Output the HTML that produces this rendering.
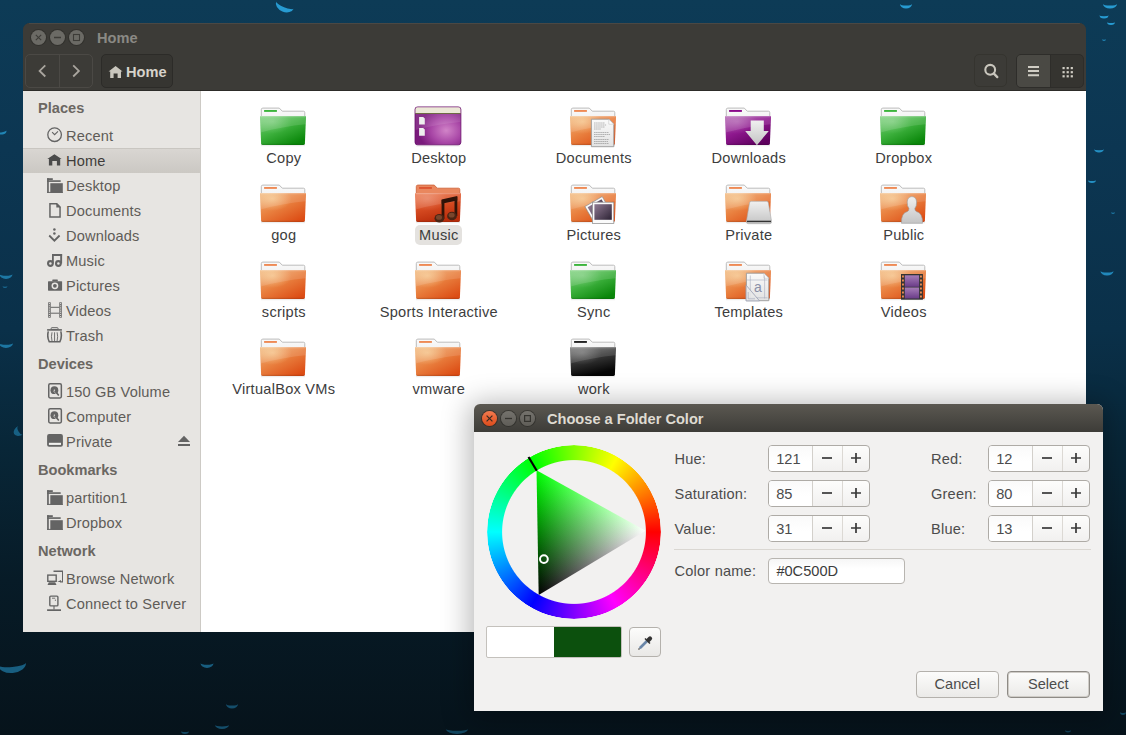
<!DOCTYPE html><html><head><meta charset="utf-8"><style>
*{box-sizing:border-box}
html,body{margin:0;padding:0}
body{width:1126px;height:735px;overflow:hidden;position:relative;font-family:"Liberation Sans",sans-serif;
background:linear-gradient(180deg,#0d3b56 0px,#0c3652 150px,#0a3049 330px,#082637 450px,#071b27 580px,#06131b 735px);}
.a{position:absolute}
.drop{position:absolute;border-radius:50%;background:radial-gradient(ellipse 75% 65% at 50% 90%,rgba(60,180,235,0.95),rgba(40,140,195,0.7) 50%,rgba(20,70,100,0) 100%)}
#naut{position:absolute;left:23px;top:23px;width:1063px;height:609px;border-radius:7px 7px 0 0;overflow:hidden;background:#3c3b37}
#ntop{position:absolute;left:0;top:0;width:1063px;height:68px;background:#3c3b37}
#side{position:absolute;left:0;top:68px;width:178px;height:541px;background:#e7e5e2;border-right:1px solid #cdcac5}
#content{position:absolute;left:178px;top:68px;width:885px;height:541px;background:#fff}
.wb{position:absolute;width:15px;height:15px;border-radius:50%;background:#6b6a65;box-shadow:0 0 0 1px rgba(40,40,36,0.5)}
.tb{position:absolute;border:1px solid #2e2d2a;border-radius:5px}
.sh{position:absolute;left:15px;font-weight:bold;font-size:14.6px;line-height:16px;color:#6b6762;white-space:nowrap}
.si{position:absolute;left:43px;font-size:14.6px;letter-spacing:0.15px;line-height:16px;color:#5f5c58;white-space:nowrap}
.sic{position:absolute;left:24px;width:16px;height:16px}
.lbl{position:absolute;width:160px;text-align:center;font-size:14.6px;letter-spacing:0.25px;line-height:16px;color:#3d3d3d;white-space:nowrap}
.fi{position:absolute;width:48px;height:48px}
#dlg{position:absolute;left:474px;top:404px;width:629px;height:307px;border-radius:6px 6px 0 0;background:#f2f1f0;box-shadow:0 3px 28px 5px rgba(0,0,0,0.28)}
#dtop{position:absolute;left:0;top:0;width:629px;height:28px;border-radius:6px 6px 0 0;background:linear-gradient(#5b5851,#3d3c38)}
.dl{position:absolute;font-size:14.6px;letter-spacing:0.2px;line-height:16px;color:#4c4c4c;white-space:nowrap}
.spin{position:absolute;height:26px;border:1px solid #aeaba6;border-radius:4px;background:linear-gradient(#fdfdfc,#f1f0ef)}
.spin .v{position:absolute;left:0;top:0;height:24px;background:linear-gradient(#fafafa,#fff 60%);border-radius:3px 0 0 3px;border-right:1px solid #d3d0cb;font-size:14.6px;line-height:24px;padding-left:7px;color:#4c4c4c}
.btn{position:absolute;height:28px;border:1px solid #b4b1ac;border-radius:4px;background:linear-gradient(#fcfcfb,#ebeae8);text-align:center;font-size:14.6px;line-height:26px;color:#4c4c4c}
</style></head><body>
<svg class="a" style="left:0;top:0" width="1126" height="735"><g fill="#2aa6e0"><path d="M275.5 5.0A9.5 7.0 0 0 0 294.5 5.0A9.5 2.4 0 0 1 275.5 5.0Z" fill-opacity="0.9" transform="rotate(22 285 5)"/><path d="M900.0 4.0A6.0 4.5 0 0 0 912.0 4.0A6.0 1.6 0 0 1 900.0 4.0Z" fill-opacity="0.9"/><path d="M1103.0 4.0A7.0 4.5 0 0 0 1117.0 4.0A7.0 1.6 0 0 1 1103.0 4.0Z" fill-opacity="0.9"/><path d="M1099.5 15.0A4.5 3.5 0 0 0 1108.5 15.0A4.5 1.2 0 0 1 1099.5 15.0Z" fill-opacity="0.9"/><path d="M1107.0 22.0A4.0 3.0 0 0 0 1115.0 22.0A4.0 1.0 0 0 1 1107.0 22.0Z" fill-opacity="0.9"/><path d="M1102.0 39.0A2.0 2.0 0 0 0 1106.0 39.0A2.0 0.7 0 0 1 1102.0 39.0Z" fill-opacity="0.7"/><path d="M1094.0 149.0A5.0 3.5 0 0 0 1104.0 149.0A5.0 1.2 0 0 1 1094.0 149.0Z" fill-opacity="0.8"/><path d="M1088.0 180.0A4.0 3.0 0 0 0 1096.0 180.0A4.0 1.0 0 0 1 1088.0 180.0Z" fill-opacity="0.8"/><path d="M1111.0 212.0A2.0 2.0 0 0 0 1115.0 212.0A2.0 0.7 0 0 1 1111.0 212.0Z" fill-opacity="0.6"/><path d="M1100.5 271.0A6.5 4.5 0 0 0 1113.5 271.0A6.5 1.6 0 0 1 1100.5 271.0Z" fill-opacity="0.75"/><path d="M-2.5 131.0A4.5 3.5 0 0 0 6.5 131.0A4.5 1.2 0 0 1 -2.5 131.0Z" fill-opacity="0.7" transform="rotate(-10 2 131)"/><path d="M-0.5 274.0A6.5 5.0 0 0 0 12.5 274.0A6.5 1.8 0 0 1 -0.5 274.0Z" fill-opacity="0.6"/><path d="M2.5 286.0A2.5 2.0 0 0 0 7.5 286.0A2.5 0.7 0 0 1 2.5 286.0Z" fill-opacity="0.5"/><path d="M-1.0 343.0A7.0 5.0 0 0 0 13.0 343.0A7.0 1.8 0 0 1 -1.0 343.0Z" fill-opacity="0.6"/><path d="M16.0 430.0A5.0 8.0 0 0 0 26.0 430.0A5.0 2.8 0 0 1 16.0 430.0Z" fill-opacity="0.45" transform="rotate(60 21 430)"/><path d="M-2.0 664.0A14.0 9.0 0 0 0 26.0 664.0A14.0 3.1 0 0 1 -2.0 664.0Z" fill-opacity="0.5" transform="rotate(-5 12 664)"/><path d="M200.5 663.0A6.5 5.0 0 0 0 213.5 663.0A6.5 1.8 0 0 1 200.5 663.0Z" fill-opacity="0.5"/><path d="M226.0 704.0A6.0 4.5 0 0 0 238.0 704.0A6.0 1.6 0 0 1 226.0 704.0Z" fill-opacity="0.4"/><path d="M215.0 725.0A7.0 4.0 0 0 0 229.0 725.0A7.0 1.4 0 0 1 215.0 725.0Z" fill-opacity="0.4"/><path d="M181.0 731.0A4.0 3.0 0 0 0 189.0 731.0A4.0 1.0 0 0 1 181.0 731.0Z" fill-opacity="0.35"/><path d="M446.0 729.0A11.0 5.0 0 0 0 468.0 729.0A11.0 1.8 0 0 1 446.0 729.0Z" fill-opacity="0.35"/><path d="M1120.0 712.0A3.0 3.0 0 0 0 1126.0 712.0A3.0 1.0 0 0 1 1120.0 712.0Z" fill-opacity="0.35"/><path d="M1065.0 730.0A3.0 2.5 0 0 0 1071.0 730.0A3.0 0.9 0 0 1 1065.0 730.0Z" fill-opacity="0.3"/></g></svg>
<div id="naut"><div id="ntop">
<div class="wb" style="left:8px;top:7px"><svg width="15" height="15" style="position:absolute;left:0;top:0"><path d="M4.8 4.8L10.2 10.2M10.2 4.8L4.8 10.2" stroke="#3d3c38" stroke-width="1.1"/></svg></div>
<div class="wb" style="left:27px;top:7px"><svg width="15" height="15" style="position:absolute;left:0;top:0"><path d="M4 7.5H11" stroke="#3d3c38" stroke-width="1.3"/></svg></div>
<div class="wb" style="left:46px;top:7px"><svg width="15" height="15" style="position:absolute;left:0;top:0"><rect x="4.5" y="4.5" width="6" height="6" fill="none" stroke="#3d3c38" stroke-width="1.1"/></svg></div>
<div class="a" style="left:74px;top:7px;font-weight:bold;font-size:14.6px;line-height:16px;color:#8a8984">Home</div>
<div class="tb" style="left:2px;top:31px;width:68px;height:34px;border-color:#4b4945"></div>
<div class="a" style="left:36px;top:32px;width:1px;height:32px;background:#4b4945"></div>
<svg class="a" style="left:12px;top:39px" width="16" height="18"><path d="M10.3 3.3L4.6 8.9L10.3 14.5" fill="none" stroke="#a9a59e" stroke-width="1.8"/></svg>
<svg class="a" style="left:45px;top:39px" width="16" height="18"><path d="M5.2 3.3L10.9 8.9L5.2 14.5" fill="none" stroke="#a9a59e" stroke-width="1.8"/></svg>
<div class="tb" style="left:78px;top:31px;width:72px;height:34px;background:#363531;border-color:#2c2b28"></div>
<svg class="a" style="left:85px;top:41px" width="16" height="16"><path d="M0.6 7.6L7.6 2L14.6 7.6H13V14H9.6V9.6H5.6V14H2.2V7.6Z" fill="#c9c6bd"/></svg>
<div class="a" style="left:103px;top:41px;font-weight:bold;font-size:14.6px;line-height:16px;color:#d6d3cb">Home</div>
<div class="tb" style="left:951px;top:31px;width:33px;height:33px;border-color:#35342f"></div>
<svg class="a" style="left:958px;top:38px" width="20" height="20"><circle cx="9.2" cy="8.8" r="4.9" fill="none" stroke="#c9c6bd" stroke-width="2.1"/><path d="M12.7 12.4L16.3 16.1" stroke="#c9c6bd" stroke-width="2.3" stroke-linecap="round"/></svg>
<div class="tb" style="left:993px;top:31px;width:68px;height:34px;background:#353430;border-color:#2e2d2a"></div>
<div class="a" style="left:994px;top:32px;width:33px;height:32px;background:#4a4944;border-radius:4px 0 0 4px"></div>
<div class="a" style="left:1027px;top:32px;width:1px;height:32px;background:#2e2d2a"></div>
<svg class="a" style="left:1003px;top:41px" width="16" height="14"><path d="M2 3H13M2 7H13M2 11.3H13" stroke="#d0cdc4" stroke-width="2"/></svg>
<svg class="a" style="left:1039px;top:43px" width="12" height="12"><rect x="0.5" y="1.0" width="2.2" height="2.2" fill="#d0cdc4"/><rect x="0.5" y="5.1" width="2.2" height="2.2" fill="#d0cdc4"/><rect x="0.5" y="9.2" width="2.2" height="2.2" fill="#d0cdc4"/><rect x="4.6" y="1.0" width="2.2" height="2.2" fill="#d0cdc4"/><rect x="4.6" y="5.1" width="2.2" height="2.2" fill="#d0cdc4"/><rect x="4.6" y="9.2" width="2.2" height="2.2" fill="#d0cdc4"/><rect x="8.7" y="1.0" width="2.2" height="2.2" fill="#d0cdc4"/><rect x="8.7" y="5.1" width="2.2" height="2.2" fill="#d0cdc4"/><rect x="8.7" y="9.2" width="2.2" height="2.2" fill="#d0cdc4"/></svg>
<div class="a" style="left:0;top:67px;width:1063px;height:1px;background:#2d2c29"></div><div class="a" style="left:6px;top:0;width:1051px;height:1px;background:#4a4844"></div>
</div>
<div id="content"></div><div id="side">
<div class="a" style="left:0;top:57px;width:177px;height:25px;background:linear-gradient(#d9d6d2,#cbc8c3);border-top:1px solid #c9c6c1"></div>
</div>
<div class="a" style="left:0;top:68px;width:177px;height:541px">
<div class="sh" style="top:8.8px">Places</div>
<div class="si" style="top:36.6px;">Recent</div>
<svg class="sic" style="top:35.8px" width="16" height="16" viewBox="0 0 16 16"><circle cx="7.6" cy="7.7" r="6.8" fill="none" stroke="#646464" stroke-width="1.3"/><path d="M5.1 5.2L7.6 7.7L11 4.3" fill="none" stroke="#646464" stroke-width="1.1"/></svg>
<div class="si" style="top:61.9px;color:#3e3c3a">Home</div>
<svg class="sic" style="top:61.1px" width="16" height="16" viewBox="0 0 16 16"><path d="M0.3 7L7.4 2.2L14.6 7H13.2V13.6H9.9V9H5.3V13.6H1.9V7Z" fill="#4b4b4b"/></svg>
<div class="si" style="top:86.8px;">Desktop</div>
<svg class="sic" style="top:86.0px" width="16" height="16" viewBox="0 0 16 16"><rect x="0.1" y="1.2" width="1.7" height="14.7" fill="#646464"/><rect x="0.1" y="1.2" width="5.7" height="1.8" fill="#646464"/><rect x="0.1" y="3.25" width="13.6" height="1.65" fill="#646464"/><rect x="3.3" y="6.2" width="12.5" height="9.7" fill="#646464"/><rect x="0.1" y="14.9" width="15.7" height="1" fill="#646464"/></svg>
<div class="si" style="top:111.8px;">Documents</div>
<svg class="sic" style="top:111.0px" width="16" height="16" viewBox="0 0 16 16"><path d="M2.95 1.85H9.8L13.05 5.1V15.05H2.95Z" fill="none" stroke="#646464" stroke-width="1.5"/><path d="M9.3 1.1L13.8 5.6H9.3Z" fill="#646464"/></svg>
<div class="si" style="top:136.8px;">Downloads</div>
<svg class="sic" style="top:136.0px" width="16" height="16" viewBox="0 0 16 16"><circle cx="7.4" cy="2.4" r="1.25" fill="#646464"/><circle cx="7.4" cy="6.4" r="1.25" fill="#646464"/><path d="M2.2 8.5L7.4 13.7L12.6 8.5" fill="none" stroke="#646464" stroke-width="1.8"/></svg>
<div class="si" style="top:161.8px;">Music</div>
<svg class="sic" style="top:161.0px" width="16" height="16" viewBox="0 0 16 16"><path d="M5 2H15.1V4.1H6.8V11.5H5Z" fill="#646464"/><rect x="13.2" y="2" width="1.9" height="9.5" fill="#646464"/><circle cx="3.4" cy="11.5" r="2.35" fill="none" stroke="#646464" stroke-width="2.1"/><circle cx="11.4" cy="11.5" r="2.35" fill="none" stroke="#646464" stroke-width="2.1"/></svg>
<div class="si" style="top:186.8px;">Pictures</div>
<svg class="sic" style="top:186.0px" width="16" height="16" viewBox="0 0 16 16"><rect x="5.3" y="2.4" width="5.5" height="2" rx="0.5" fill="#646464"/><rect x="1" y="4.2" width="14.1" height="9.5" rx="0.6" fill="#646464"/><circle cx="7.9" cy="8.8" r="3.4" fill="#e7e5e2"/><circle cx="7.9" cy="8.8" r="1.9" fill="#646464"/></svg>
<div class="si" style="top:211.8px;">Videos</div>
<svg class="sic" style="top:211.0px" width="16" height="16" viewBox="0 0 16 16"><rect x="1.2" y="0.3" width="2.5" height="15.4" fill="#646464"/><rect x="12.3" y="0.3" width="2.5" height="15.4" fill="#646464"/><circle cx="2.45" cy="1.60" r="0.6" fill="#e7e5e2"/><circle cx="13.55" cy="1.60" r="0.6" fill="#e7e5e2"/><circle cx="2.45" cy="3.75" r="0.6" fill="#e7e5e2"/><circle cx="13.55" cy="3.75" r="0.6" fill="#e7e5e2"/><circle cx="2.45" cy="5.90" r="0.6" fill="#e7e5e2"/><circle cx="13.55" cy="5.90" r="0.6" fill="#e7e5e2"/><circle cx="2.45" cy="8.05" r="0.6" fill="#e7e5e2"/><circle cx="13.55" cy="8.05" r="0.6" fill="#e7e5e2"/><circle cx="2.45" cy="10.20" r="0.6" fill="#e7e5e2"/><circle cx="13.55" cy="10.20" r="0.6" fill="#e7e5e2"/><circle cx="2.45" cy="12.35" r="0.6" fill="#e7e5e2"/><circle cx="13.55" cy="12.35" r="0.6" fill="#e7e5e2"/><circle cx="2.45" cy="14.50" r="0.6" fill="#e7e5e2"/><circle cx="13.55" cy="14.50" r="0.6" fill="#e7e5e2"/><path d="M3.7 5.3H12.3M3.7 11.2H12.3" stroke="#646464" stroke-width="1"/></svg>
<div class="si" style="top:236.8px;">Trash</div>
<svg class="sic" style="top:236.0px" width="16" height="16" viewBox="0 0 16 16"><rect x="4.2" y="0.7" width="6.8" height="1.9" rx="0.6" fill="none" stroke="#646464" stroke-width="1"/><rect x="0.1" y="2.1" width="14.8" height="1.6" fill="#646464"/><path d="M1.3 4.4Q-0.2 10 2.3 14.8H12.8Q15.3 10 13.8 4.4" fill="none" stroke="#646464" stroke-width="1.6"/><path d="M5 5.3Q3.9 9.7 5 14M7.55 5.3V14M10.1 5.3Q11.2 9.7 10.1 14" fill="none" stroke="#646464" stroke-width="0.9"/></svg>
<div class="sh" style="top:264.6px">Devices</div>
<div class="si" style="top:292.8px;">150 GB Volume</div>
<svg class="sic" style="top:292.0px" width="16" height="16" viewBox="0 0 16 16"><rect x="1.75" y="0.85" width="12.6" height="14.1" rx="1.4" fill="none" stroke="#646464" stroke-width="1.5"/><circle cx="7.4" cy="7.2" r="3.9" fill="#646464"/><circle cx="7.4" cy="7.2" r="0.8" fill="#e7e5e2"/><path d="M6.6 8L10.6 12.3" stroke="#e7e5e2" stroke-width="0.8"/><path d="M8.4 8.2L11.4 12" stroke="#646464" stroke-width="1.6" stroke-linecap="round"/></svg>
<div class="si" style="top:317.9px;">Computer</div>
<svg class="sic" style="top:317.1px" width="16" height="16" viewBox="0 0 16 16"><rect x="1.75" y="0.85" width="12.6" height="14.1" rx="1.4" fill="none" stroke="#646464" stroke-width="1.5"/><circle cx="7.4" cy="7.2" r="3.9" fill="#646464"/><circle cx="7.4" cy="7.2" r="0.8" fill="#e7e5e2"/><path d="M6.6 8L10.6 12.3" stroke="#e7e5e2" stroke-width="0.8"/><path d="M8.4 8.2L11.4 12" stroke="#646464" stroke-width="1.6" stroke-linecap="round"/></svg>
<div class="si" style="top:342.9px;">Private</div>
<svg class="sic" style="top:342.1px" width="16" height="16" viewBox="0 0 16 16"><rect x="0.1" y="1" width="15.8" height="12.7" rx="2" fill="#646464"/><rect x="1.9" y="9.8" width="12.1" height="2.1" fill="#f2f2f0"/></svg>
<div class="sh" style="top:371.2px">Bookmarks</div>
<div class="si" style="top:398.5px;">partition1</div>
<svg class="sic" style="top:397.7px" width="16" height="16" viewBox="0 0 16 16"><rect x="0.1" y="1.2" width="1.7" height="14.7" fill="#646464"/><rect x="0.1" y="1.2" width="5.7" height="1.8" fill="#646464"/><rect x="0.1" y="3.25" width="13.6" height="1.65" fill="#646464"/><rect x="3.3" y="6.2" width="12.5" height="9.7" fill="#646464"/><rect x="0.1" y="14.9" width="15.7" height="1" fill="#646464"/></svg>
<div class="si" style="top:423.6px;">Dropbox</div>
<svg class="sic" style="top:422.8px" width="16" height="16" viewBox="0 0 16 16"><rect x="0.1" y="1.2" width="1.7" height="14.7" fill="#646464"/><rect x="0.1" y="1.2" width="5.7" height="1.8" fill="#646464"/><rect x="0.1" y="3.25" width="13.6" height="1.65" fill="#646464"/><rect x="3.3" y="6.2" width="12.5" height="9.7" fill="#646464"/><rect x="0.1" y="14.9" width="15.7" height="1" fill="#646464"/></svg>
<div class="sh" style="top:451.8px">Network</div>
<div class="si" style="top:479.6px;">Browse Network</div>
<svg class="sic" style="top:478.8px" width="16" height="16" viewBox="0 0 16 16"><path d="M6.5 1.3H15.7V11.9H13" fill="none" stroke="#646464" stroke-width="1.4"/><path d="M10.3 11.9L14 10V11.9Z" fill="#646464"/><rect x="0.8" y="5.1" width="8.4" height="6.2" fill="none" stroke="#646464" stroke-width="1.4"/><path d="M0.5 14.9L1.8 12.2H8.2L9.5 14.9Z" fill="#646464"/></svg>
<div class="si" style="top:504.7px;">Connect to Server</div>
<svg class="sic" style="top:503.9px" width="16" height="16" viewBox="0 0 16 16"><rect x="2.8" y="1.1" width="8.1" height="9.8" rx="1" fill="none" stroke="#646464" stroke-width="1.4"/><path d="M5 3.2H8.2" stroke="#646464" stroke-width="0.9"/><circle cx="8.4" cy="5.2" r="0.6" fill="#646464"/><path d="M7 11V14.4" stroke="#646464" stroke-width="1.1"/><rect x="0.1" y="14.3" width="13.9" height="1.7" fill="#646464"/></svg>
<svg class="a" style="left:155px;top:343.5px" width="12" height="12"><path d="M0 7L6 0.8L12 7Z" fill="#636363"/><rect x="0" y="9" width="12" height="2" fill="#636363"/></svg>
</div>
</div>
<svg width="0" height="0" style="position:absolute">
<defs>
<linearGradient id="gGreen" x1="0" y1="0" x2="0.7" y2="1"><stop offset="0" stop-color="#7ed27e"/><stop offset="0.5" stop-color="#3fb23f"/><stop offset="1" stop-color="#0a870a"/></linearGradient>
<linearGradient id="gOrange" x1="0" y1="0" x2="0.8" y2="1"><stop offset="0" stop-color="#f1b47a"/><stop offset="0.5" stop-color="#e9803f"/><stop offset="1" stop-color="#dc4c14"/></linearGradient>
<linearGradient id="gPurple" x1="0" y1="0" x2="0.7" y2="1"><stop offset="0" stop-color="#b262b2"/><stop offset="0.5" stop-color="#8e188e"/><stop offset="1" stop-color="#5e005e"/></linearGradient>
<linearGradient id="gBlack" x1="0" y1="0" x2="0.35" y2="1"><stop offset="0" stop-color="#777"/><stop offset="0.45" stop-color="#3a3a3a"/><stop offset="1" stop-color="#050505"/></linearGradient>
<linearGradient id="gRed" x1="0" y1="0" x2="0.35" y2="1"><stop offset="0" stop-color="#ea7448"/><stop offset="0.45" stop-color="#dc5126"/><stop offset="1" stop-color="#bb2e0c"/></linearGradient>
<radialGradient id="gHiW" cx="0.27" cy="0.2" r="0.42"><stop offset="0" stop-color="#fff" stop-opacity="0.2"/><stop offset="1" stop-color="#fff" stop-opacity="0"/></radialGradient>
<radialGradient id="gHi" cx="0.27" cy="0.2" r="0.42"><stop offset="0" stop-color="#fff3c0" stop-opacity="0.45"/><stop offset="1" stop-color="#fff3c0" stop-opacity="0"/></radialGradient>
<linearGradient id="gTab" x1="0" y1="0" x2="0" y2="1"><stop offset="0" stop-color="#fafafa"/><stop offset="0.6" stop-color="#f4f4f4"/><stop offset="1" stop-color="#dcdcdc"/></linearGradient>
<linearGradient id="gPaper" x1="0" y1="0" x2="0" y2="1"><stop offset="0" stop-color="#fafafa"/><stop offset="1" stop-color="#e2e2e2"/></linearGradient>
<linearGradient id="gGray" x1="0" y1="0" x2="0" y2="1"><stop offset="0" stop-color="#f0f0f0"/><stop offset="1" stop-color="#c4c4c4"/></linearGradient>
<radialGradient id="gDesk" cx="0.68" cy="0.62" r="0.6"><stop offset="0" stop-color="#d184c8"/><stop offset="0.55" stop-color="#a846a6"/><stop offset="1" stop-color="#7a1a7c"/></radialGradient>
<linearGradient id="gPhoto" x1="0" y1="0" x2="1" y2="1"><stop offset="0" stop-color="#8f7a92"/><stop offset="1" stop-color="#2c2234"/></linearGradient>
<linearGradient id="gFilm" x1="0" y1="0" x2="0" y2="1"><stop offset="0" stop-color="#a67cb8"/><stop offset="1" stop-color="#6a3c88"/></linearGradient>
<linearGradient id="gNote" x1="0" y1="0" x2="1" y2="1"><stop offset="0" stop-color="#5a2a18"/><stop offset="1" stop-color="#2f1208"/></linearGradient>
</defs></svg>
<svg class="fi" style="left:259px;top:100px" width="48" height="48" viewBox="0 0 48 48"><path d="M2 44.2H46V46.3H2Z" fill="#000" fill-opacity="0.07"/><path d="M2.3 21V9.6Q2.3 8.1 3.8 8.1H20.3L23.3 11.2H44.5Q45.8 11.2 45.8 12.6V21Z" fill="url(#gTab)" stroke="#b4b4b4" stroke-width="0.9"/><rect x="5.1" y="10" width="12.8" height="1.9" fill="#3cb43c"/><path d="M1 16.7Q1 15.9 1.9 15.9H46.1Q47 15.9 47 16.7L45.9 43.6Q45.8 45 44.4 45H3.6Q2.2 45 2.1 43.6Z" fill="url(#gGreen)"/><path d="M1 16.7Q1 15.9 1.9 15.9H46.1Q47 15.9 47 16.7L45.9 43.6Q45.8 45 44.4 45H3.6Q2.2 45 2.1 43.6Z" fill="url(#gHiW)"/><path d="M1.1 16H46.9L46.6 24.3Q24 26.5 1.5 32.5Z" fill="#fff" fill-opacity="0.12"/><path d="M2.2 44.3H45.8" stroke="#000" stroke-opacity="0.12" stroke-width="1.2"/><path d="M1.6 16.7H46.4" stroke="#fff" stroke-opacity="0.35" stroke-width="0.8"/></svg>
<div class="lbl" style="left:203.8px;top:149.9px">Copy</div>
<svg class="fi" style="left:414px;top:100px" width="48" height="48" viewBox="0 0 48 48"><path d="M2 44.5H46V46.5H2Z" fill="#000" fill-opacity="0.07"/><rect x="1" y="6.9" width="45.9" height="37.9" rx="2.6" fill="url(#gDesk)" stroke="#6a106c" stroke-width="0.8"/><path d="M1.4 13.3V9.4Q1.4 7.3 3.5 7.3H44.4Q46.5 7.3 46.5 9.4V13.3Z" fill="#ebe8d6"/><path d="M1.4 13.5H46.5" stroke="#6e6a44" stroke-width="1"/><path d="M1.4 14H46.5L46.4 22Q24 24 1.5 30Z" fill="#fff" fill-opacity="0.10"/><path d="M5.1 17H9.2L10.8 18.6V24.6H5.1Z" fill="#eeeeee"/><path d="M5.1 28H9.2L10.8 29.6V35.7H5.1Z" fill="#eeeeee"/></svg>
<div class="lbl" style="left:358.8px;top:149.9px">Desktop</div>
<svg class="fi" style="left:569px;top:100px" width="48" height="48" viewBox="0 0 48 48"><path d="M2 44.2H46V46.3H2Z" fill="#000" fill-opacity="0.07"/><path d="M2.3 21V9.6Q2.3 8.1 3.8 8.1H20.3L23.3 11.2H44.5Q45.8 11.2 45.8 12.6V21Z" fill="url(#gTab)" stroke="#b4b4b4" stroke-width="0.9"/><rect x="5.1" y="10" width="12.8" height="1.9" fill="#ee8a55"/><path d="M1 16.7Q1 15.9 1.9 15.9H46.1Q47 15.9 47 16.7L45.9 43.6Q45.8 45 44.4 45H3.6Q2.2 45 2.1 43.6Z" fill="url(#gOrange)"/><path d="M1 16.7Q1 15.9 1.9 15.9H46.1Q47 15.9 47 16.7L45.9 43.6Q45.8 45 44.4 45H3.6Q2.2 45 2.1 43.6Z" fill="url(#gHi)"/><path d="M1.1 16H46.9L46.6 24.3Q24 26.5 1.5 32.5Z" fill="#fff" fill-opacity="0.12"/><path d="M2.2 44.3H45.8" stroke="#000" stroke-opacity="0.12" stroke-width="1.2"/><path d="M1.6 16.7H46.4" stroke="#fff" stroke-opacity="0.35" stroke-width="0.8"/><path d="M22.4 19.2H39.8L44.8 24.2V46.7H22.4Z" fill="url(#gPaper)" stroke="#9a9a9a" stroke-width="0.9"/><path d="M39.8 19.2V24.2H44.8Z" fill="#fff" stroke="#bbb" stroke-width="0.5"/><path d="M25 23H36" stroke="#6a6a6a" stroke-width="0.45" stroke-dasharray="1.6 0.5"/><path d="M25 25H37.5" stroke="#6a6a6a" stroke-width="0.45" stroke-dasharray="1.6 0.5"/><path d="M25 27H36" stroke="#6a6a6a" stroke-width="0.45" stroke-dasharray="1.6 0.5"/><path d="M25 29H32" stroke="#6a6a6a" stroke-width="0.45" stroke-dasharray="1.6 0.5"/><path d="M25 32.5H40" stroke="#6a6a6a" stroke-width="0.45" stroke-dasharray="1.6 0.5"/><path d="M25 34.5H41" stroke="#6a6a6a" stroke-width="0.45" stroke-dasharray="1.6 0.5"/><path d="M25 36.5H36" stroke="#6a6a6a" stroke-width="0.45" stroke-dasharray="1.6 0.5"/><path d="M25 39.5H40" stroke="#6a6a6a" stroke-width="0.45" stroke-dasharray="1.6 0.5"/><path d="M25 41.5H39" stroke="#6a6a6a" stroke-width="0.45" stroke-dasharray="1.6 0.5"/><path d="M25 43.5H40" stroke="#6a6a6a" stroke-width="0.45" stroke-dasharray="1.6 0.5"/></svg>
<div class="lbl" style="left:513.8px;top:149.9px">Documents</div>
<svg class="fi" style="left:724px;top:100px" width="48" height="48" viewBox="0 0 48 48"><path d="M2 44.2H46V46.3H2Z" fill="#000" fill-opacity="0.07"/><path d="M2.3 21V9.6Q2.3 8.1 3.8 8.1H20.3L23.3 11.2H44.5Q45.8 11.2 45.8 12.6V21Z" fill="url(#gTab)" stroke="#b4b4b4" stroke-width="0.9"/><rect x="5.1" y="10" width="12.8" height="1.9" fill="#8a0a8a"/><path d="M1 16.7Q1 15.9 1.9 15.9H46.1Q47 15.9 47 16.7L45.9 43.6Q45.8 45 44.4 45H3.6Q2.2 45 2.1 43.6Z" fill="url(#gPurple)"/><path d="M1 16.7Q1 15.9 1.9 15.9H46.1Q47 15.9 47 16.7L45.9 43.6Q45.8 45 44.4 45H3.6Q2.2 45 2.1 43.6Z" fill="url(#gHiW)"/><path d="M1.1 16H46.9L46.6 24.3Q24 26.5 1.5 32.5Z" fill="#fff" fill-opacity="0.12"/><path d="M2.2 44.3H45.8" stroke="#000" stroke-opacity="0.12" stroke-width="1.2"/><path d="M1.6 16.7H46.4" stroke="#fff" stroke-opacity="0.35" stroke-width="0.8"/><path d="M26.7 20.5H39.8V31H44.8L32.9 45.2L21.2 31H26.7Z" fill="url(#gGray)"/></svg>
<div class="lbl" style="left:668.8px;top:149.9px">Downloads</div>
<svg class="fi" style="left:879px;top:100px" width="48" height="48" viewBox="0 0 48 48"><path d="M2 44.2H46V46.3H2Z" fill="#000" fill-opacity="0.07"/><path d="M2.3 21V9.6Q2.3 8.1 3.8 8.1H20.3L23.3 11.2H44.5Q45.8 11.2 45.8 12.6V21Z" fill="url(#gTab)" stroke="#b4b4b4" stroke-width="0.9"/><rect x="5.1" y="10" width="12.8" height="1.9" fill="#3cb43c"/><path d="M1 16.7Q1 15.9 1.9 15.9H46.1Q47 15.9 47 16.7L45.9 43.6Q45.8 45 44.4 45H3.6Q2.2 45 2.1 43.6Z" fill="url(#gGreen)"/><path d="M1 16.7Q1 15.9 1.9 15.9H46.1Q47 15.9 47 16.7L45.9 43.6Q45.8 45 44.4 45H3.6Q2.2 45 2.1 43.6Z" fill="url(#gHiW)"/><path d="M1.1 16H46.9L46.6 24.3Q24 26.5 1.5 32.5Z" fill="#fff" fill-opacity="0.12"/><path d="M2.2 44.3H45.8" stroke="#000" stroke-opacity="0.12" stroke-width="1.2"/><path d="M1.6 16.7H46.4" stroke="#fff" stroke-opacity="0.35" stroke-width="0.8"/></svg>
<div class="lbl" style="left:823.8px;top:149.9px">Dropbox</div>
<svg class="fi" style="left:259px;top:177px" width="48" height="48" viewBox="0 0 48 48"><path d="M2 44.2H46V46.3H2Z" fill="#000" fill-opacity="0.07"/><path d="M2.3 21V9.6Q2.3 8.1 3.8 8.1H20.3L23.3 11.2H44.5Q45.8 11.2 45.8 12.6V21Z" fill="url(#gTab)" stroke="#b4b4b4" stroke-width="0.9"/><rect x="5.1" y="10" width="12.8" height="1.9" fill="#ee8a55"/><path d="M1 16.7Q1 15.9 1.9 15.9H46.1Q47 15.9 47 16.7L45.9 43.6Q45.8 45 44.4 45H3.6Q2.2 45 2.1 43.6Z" fill="url(#gOrange)"/><path d="M1 16.7Q1 15.9 1.9 15.9H46.1Q47 15.9 47 16.7L45.9 43.6Q45.8 45 44.4 45H3.6Q2.2 45 2.1 43.6Z" fill="url(#gHi)"/><path d="M1.1 16H46.9L46.6 24.3Q24 26.5 1.5 32.5Z" fill="#fff" fill-opacity="0.12"/><path d="M2.2 44.3H45.8" stroke="#000" stroke-opacity="0.12" stroke-width="1.2"/><path d="M1.6 16.7H46.4" stroke="#fff" stroke-opacity="0.35" stroke-width="0.8"/></svg>
<div class="lbl" style="left:203.8px;top:226.9px">gog</div>
<svg class="fi" style="left:414px;top:177px" width="48" height="48" viewBox="0 0 48 48"><path d="M2 44.2H46V46.3H2Z" fill="#000" fill-opacity="0.07"/><path d="M2.3 21V9.6Q2.3 8.1 3.8 8.1H20.3L23.3 11.2H44.5Q45.8 11.2 45.8 12.6V21Z" fill="#e9875e" stroke="#d0683e" stroke-width="0.9"/><rect x="5.1" y="10" width="12.8" height="1.9" fill="#dd5530"/><path d="M1 16.7Q1 15.9 1.9 15.9H46.1Q47 15.9 47 16.7L45.9 43.6Q45.8 45 44.4 45H3.6Q2.2 45 2.1 43.6Z" fill="url(#gRed)"/><path d="M1 16.7Q1 15.9 1.9 15.9H46.1Q47 15.9 47 16.7L45.9 43.6Q45.8 45 44.4 45H3.6Q2.2 45 2.1 43.6Z" fill="url(#gHiW)"/><path d="M1.1 16H46.9L46.6 24.3Q24 26.5 1.5 32.5Z" fill="#fff" fill-opacity="0.12"/><path d="M2.2 44.3H45.8" stroke="#000" stroke-opacity="0.12" stroke-width="1.2"/><path d="M1.6 16.7H46.4" stroke="#fff" stroke-opacity="0.35" stroke-width="0.8"/><path d="M27.6 22.4L43.3 19V23.6L27.6 26.8Z" fill="#2e1208"/><path d="M29 23V41.5M41.9 20V39" stroke="#321408" stroke-width="2.8"/><ellipse cx="25.4" cy="41.2" rx="4.9" ry="4.3" fill="#4a2414"/><ellipse cx="38" cy="39" rx="4.9" ry="4.3" fill="#4a2414"/><ellipse cx="25" cy="40.4" rx="3" ry="2.4" fill="#8a5234" fill-opacity="0.75"/><ellipse cx="37.6" cy="38.2" rx="3" ry="2.4" fill="#8a5234" fill-opacity="0.75"/></svg>
<div class="a" style="left:415px;top:225px;width:47px;height:20px;border-radius:5px;background:#e4e2df"></div>
<div class="lbl" style="left:358.8px;top:226.9px">Music</div>
<svg class="fi" style="left:569px;top:177px" width="48" height="48" viewBox="0 0 48 48"><path d="M2 44.2H46V46.3H2Z" fill="#000" fill-opacity="0.07"/><path d="M2.3 21V9.6Q2.3 8.1 3.8 8.1H20.3L23.3 11.2H44.5Q45.8 11.2 45.8 12.6V21Z" fill="url(#gTab)" stroke="#b4b4b4" stroke-width="0.9"/><rect x="5.1" y="10" width="12.8" height="1.9" fill="#ee8a55"/><path d="M1 16.7Q1 15.9 1.9 15.9H46.1Q47 15.9 47 16.7L45.9 43.6Q45.8 45 44.4 45H3.6Q2.2 45 2.1 43.6Z" fill="url(#gOrange)"/><path d="M1 16.7Q1 15.9 1.9 15.9H46.1Q47 15.9 47 16.7L45.9 43.6Q45.8 45 44.4 45H3.6Q2.2 45 2.1 43.6Z" fill="url(#gHi)"/><path d="M1.1 16H46.9L46.6 24.3Q24 26.5 1.5 32.5Z" fill="#fff" fill-opacity="0.12"/><path d="M2.2 44.3H45.8" stroke="#000" stroke-opacity="0.12" stroke-width="1.2"/><path d="M1.6 16.7H46.4" stroke="#fff" stroke-opacity="0.35" stroke-width="0.8"/><g transform="rotate(-30 30 33)"><rect x="19.5" y="23" width="20" height="19" fill="#fafafa" stroke="#888" stroke-width="0.6"/><rect x="21.5" y="25" width="16" height="15" fill="url(#gPhoto)"/></g><rect x="23.4" y="25.2" width="21.4" height="21.4" fill="#fafafa" stroke="#8a8a8a" stroke-width="0.7"/><rect x="25.4" y="27.2" width="17.4" height="15.6" fill="url(#gPhoto)"/></svg>
<div class="lbl" style="left:513.8px;top:226.9px">Pictures</div>
<svg class="fi" style="left:724px;top:177px" width="48" height="48" viewBox="0 0 48 48"><path d="M2 44.2H46V46.3H2Z" fill="#000" fill-opacity="0.07"/><path d="M2.3 21V9.6Q2.3 8.1 3.8 8.1H20.3L23.3 11.2H44.5Q45.8 11.2 45.8 12.6V21Z" fill="url(#gTab)" stroke="#b4b4b4" stroke-width="0.9"/><rect x="5.1" y="10" width="12.8" height="1.9" fill="#ee8a55"/><path d="M1 16.7Q1 15.9 1.9 15.9H46.1Q47 15.9 47 16.7L45.9 43.6Q45.8 45 44.4 45H3.6Q2.2 45 2.1 43.6Z" fill="url(#gOrange)"/><path d="M1 16.7Q1 15.9 1.9 15.9H46.1Q47 15.9 47 16.7L45.9 43.6Q45.8 45 44.4 45H3.6Q2.2 45 2.1 43.6Z" fill="url(#gHi)"/><path d="M1.1 16H46.9L46.6 24.3Q24 26.5 1.5 32.5Z" fill="#fff" fill-opacity="0.12"/><path d="M2.2 44.3H45.8" stroke="#000" stroke-opacity="0.12" stroke-width="1.2"/><path d="M1.6 16.7H46.4" stroke="#fff" stroke-opacity="0.35" stroke-width="0.8"/><path d="M25.5 26Q25.6 24.3 27.2 24.3H42.6Q44.3 24.3 44.4 26L47.6 44.4Q47.8 46.7 45.6 46.7H24.4Q22.2 46.7 22.4 44.4Z" fill="url(#gGray)" stroke="#a8a8a8" stroke-width="0.6"/><rect x="23" y="43.7" width="24" height="1.4" fill="#333"/></svg>
<div class="lbl" style="left:668.8px;top:226.9px">Private</div>
<svg class="fi" style="left:879px;top:177px" width="48" height="48" viewBox="0 0 48 48"><path d="M2 44.2H46V46.3H2Z" fill="#000" fill-opacity="0.07"/><path d="M2.3 21V9.6Q2.3 8.1 3.8 8.1H20.3L23.3 11.2H44.5Q45.8 11.2 45.8 12.6V21Z" fill="url(#gTab)" stroke="#b4b4b4" stroke-width="0.9"/><rect x="5.1" y="10" width="12.8" height="1.9" fill="#ee8a55"/><path d="M1 16.7Q1 15.9 1.9 15.9H46.1Q47 15.9 47 16.7L45.9 43.6Q45.8 45 44.4 45H3.6Q2.2 45 2.1 43.6Z" fill="url(#gOrange)"/><path d="M1 16.7Q1 15.9 1.9 15.9H46.1Q47 15.9 47 16.7L45.9 43.6Q45.8 45 44.4 45H3.6Q2.2 45 2.1 43.6Z" fill="url(#gHi)"/><path d="M1.1 16H46.9L46.6 24.3Q24 26.5 1.5 32.5Z" fill="#fff" fill-opacity="0.12"/><path d="M2.2 44.3H45.8" stroke="#000" stroke-opacity="0.12" stroke-width="1.2"/><path d="M1.6 16.7H46.4" stroke="#fff" stroke-opacity="0.35" stroke-width="0.8"/><path d="M22.5 46.3Q22 36 28.5 34.5Q30 33.8 30 31.5Q28 29 28.2 25Q28.5 20 32.9 19.6Q37.3 20 37.6 25Q37.8 29 35.8 31.5Q35.8 33.8 37.3 34.5Q43.8 36 43.5 46.3Z" fill="url(#gGray)" stroke="#9a9a9a" stroke-width="0.6"/></svg>
<div class="lbl" style="left:823.8px;top:226.9px">Public</div>
<svg class="fi" style="left:259px;top:254px" width="48" height="48" viewBox="0 0 48 48"><path d="M2 44.2H46V46.3H2Z" fill="#000" fill-opacity="0.07"/><path d="M2.3 21V9.6Q2.3 8.1 3.8 8.1H20.3L23.3 11.2H44.5Q45.8 11.2 45.8 12.6V21Z" fill="url(#gTab)" stroke="#b4b4b4" stroke-width="0.9"/><rect x="5.1" y="10" width="12.8" height="1.9" fill="#ee8a55"/><path d="M1 16.7Q1 15.9 1.9 15.9H46.1Q47 15.9 47 16.7L45.9 43.6Q45.8 45 44.4 45H3.6Q2.2 45 2.1 43.6Z" fill="url(#gOrange)"/><path d="M1 16.7Q1 15.9 1.9 15.9H46.1Q47 15.9 47 16.7L45.9 43.6Q45.8 45 44.4 45H3.6Q2.2 45 2.1 43.6Z" fill="url(#gHi)"/><path d="M1.1 16H46.9L46.6 24.3Q24 26.5 1.5 32.5Z" fill="#fff" fill-opacity="0.12"/><path d="M2.2 44.3H45.8" stroke="#000" stroke-opacity="0.12" stroke-width="1.2"/><path d="M1.6 16.7H46.4" stroke="#fff" stroke-opacity="0.35" stroke-width="0.8"/></svg>
<div class="lbl" style="left:203.8px;top:303.9px">scripts</div>
<svg class="fi" style="left:414px;top:254px" width="48" height="48" viewBox="0 0 48 48"><path d="M2 44.2H46V46.3H2Z" fill="#000" fill-opacity="0.07"/><path d="M2.3 21V9.6Q2.3 8.1 3.8 8.1H20.3L23.3 11.2H44.5Q45.8 11.2 45.8 12.6V21Z" fill="url(#gTab)" stroke="#b4b4b4" stroke-width="0.9"/><rect x="5.1" y="10" width="12.8" height="1.9" fill="#ee8a55"/><path d="M1 16.7Q1 15.9 1.9 15.9H46.1Q47 15.9 47 16.7L45.9 43.6Q45.8 45 44.4 45H3.6Q2.2 45 2.1 43.6Z" fill="url(#gOrange)"/><path d="M1 16.7Q1 15.9 1.9 15.9H46.1Q47 15.9 47 16.7L45.9 43.6Q45.8 45 44.4 45H3.6Q2.2 45 2.1 43.6Z" fill="url(#gHi)"/><path d="M1.1 16H46.9L46.6 24.3Q24 26.5 1.5 32.5Z" fill="#fff" fill-opacity="0.12"/><path d="M2.2 44.3H45.8" stroke="#000" stroke-opacity="0.12" stroke-width="1.2"/><path d="M1.6 16.7H46.4" stroke="#fff" stroke-opacity="0.35" stroke-width="0.8"/></svg>
<div class="lbl" style="left:358.8px;top:303.9px">Sports Interactive</div>
<svg class="fi" style="left:569px;top:254px" width="48" height="48" viewBox="0 0 48 48"><path d="M2 44.2H46V46.3H2Z" fill="#000" fill-opacity="0.07"/><path d="M2.3 21V9.6Q2.3 8.1 3.8 8.1H20.3L23.3 11.2H44.5Q45.8 11.2 45.8 12.6V21Z" fill="url(#gTab)" stroke="#b4b4b4" stroke-width="0.9"/><rect x="5.1" y="10" width="12.8" height="1.9" fill="#3cb43c"/><path d="M1 16.7Q1 15.9 1.9 15.9H46.1Q47 15.9 47 16.7L45.9 43.6Q45.8 45 44.4 45H3.6Q2.2 45 2.1 43.6Z" fill="url(#gGreen)"/><path d="M1 16.7Q1 15.9 1.9 15.9H46.1Q47 15.9 47 16.7L45.9 43.6Q45.8 45 44.4 45H3.6Q2.2 45 2.1 43.6Z" fill="url(#gHiW)"/><path d="M1.1 16H46.9L46.6 24.3Q24 26.5 1.5 32.5Z" fill="#fff" fill-opacity="0.12"/><path d="M2.2 44.3H45.8" stroke="#000" stroke-opacity="0.12" stroke-width="1.2"/><path d="M1.6 16.7H46.4" stroke="#fff" stroke-opacity="0.35" stroke-width="0.8"/></svg>
<div class="lbl" style="left:513.8px;top:303.9px">Sync</div>
<svg class="fi" style="left:724px;top:254px" width="48" height="48" viewBox="0 0 48 48"><path d="M2 44.2H46V46.3H2Z" fill="#000" fill-opacity="0.07"/><path d="M2.3 21V9.6Q2.3 8.1 3.8 8.1H20.3L23.3 11.2H44.5Q45.8 11.2 45.8 12.6V21Z" fill="url(#gTab)" stroke="#b4b4b4" stroke-width="0.9"/><rect x="5.1" y="10" width="12.8" height="1.9" fill="#ee8a55"/><path d="M1 16.7Q1 15.9 1.9 15.9H46.1Q47 15.9 47 16.7L45.9 43.6Q45.8 45 44.4 45H3.6Q2.2 45 2.1 43.6Z" fill="url(#gOrange)"/><path d="M1 16.7Q1 15.9 1.9 15.9H46.1Q47 15.9 47 16.7L45.9 43.6Q45.8 45 44.4 45H3.6Q2.2 45 2.1 43.6Z" fill="url(#gHi)"/><path d="M1.1 16H46.9L46.6 24.3Q24 26.5 1.5 32.5Z" fill="#fff" fill-opacity="0.12"/><path d="M2.2 44.3H45.8" stroke="#000" stroke-opacity="0.12" stroke-width="1.2"/><path d="M1.6 16.7H46.4" stroke="#fff" stroke-opacity="0.35" stroke-width="0.8"/><path d="M22.4 19.2H39.8L44.8 24.2V46.7H22.4Z" fill="url(#gPaper)" stroke="#9a9a9a" stroke-width="0.9"/><path d="M39.8 19.2V24.2H44.8Z" fill="#fff" stroke="#bbb" stroke-width="0.5"/><path d="M26.3 21.5V44.5M40.6 21.5V44.5M23 26H43.5M23 43.8H43.5" stroke="#9aa0b4" stroke-width="0.5"/><text x="34" y="37.6" font-family="Liberation Sans" font-size="14" fill="#8a90a8" text-anchor="middle">a</text><path d="M22 31V46.9H35.5Z" fill="#e8e8e8" fill-opacity="0.85" stroke="#9aa0b4" stroke-width="0.8"/><path d="M24.2 38V44.8H31" fill="none" stroke="#9aa0b4" stroke-width="0.6"/></svg>
<div class="lbl" style="left:668.8px;top:303.9px">Templates</div>
<svg class="fi" style="left:879px;top:254px" width="48" height="48" viewBox="0 0 48 48"><path d="M2 44.2H46V46.3H2Z" fill="#000" fill-opacity="0.07"/><path d="M2.3 21V9.6Q2.3 8.1 3.8 8.1H20.3L23.3 11.2H44.5Q45.8 11.2 45.8 12.6V21Z" fill="url(#gTab)" stroke="#b4b4b4" stroke-width="0.9"/><rect x="5.1" y="10" width="12.8" height="1.9" fill="#ee8a55"/><path d="M1 16.7Q1 15.9 1.9 15.9H46.1Q47 15.9 47 16.7L45.9 43.6Q45.8 45 44.4 45H3.6Q2.2 45 2.1 43.6Z" fill="url(#gOrange)"/><path d="M1 16.7Q1 15.9 1.9 15.9H46.1Q47 15.9 47 16.7L45.9 43.6Q45.8 45 44.4 45H3.6Q2.2 45 2.1 43.6Z" fill="url(#gHi)"/><path d="M1.1 16H46.9L46.6 24.3Q24 26.5 1.5 32.5Z" fill="#fff" fill-opacity="0.12"/><path d="M2.2 44.3H45.8" stroke="#000" stroke-opacity="0.12" stroke-width="1.2"/><path d="M1.6 16.7H46.4" stroke="#fff" stroke-opacity="0.35" stroke-width="0.8"/><rect x="22" y="20" width="21.9" height="25.7" fill="#333"/><rect x="25.8" y="21.3" width="14.3" height="11.5" fill="url(#gFilm)"/><rect x="25.8" y="33.5" width="14.3" height="11" fill="url(#gFilm)"/><rect x="23" y="21.5" width="1.9" height="2" fill="#e98a50"/><rect x="41" y="21.5" width="1.9" height="2" fill="#e98a50"/><rect x="23" y="25.5" width="1.9" height="2" fill="#e98a50"/><rect x="41" y="25.5" width="1.9" height="2" fill="#e98a50"/><rect x="23" y="29.5" width="1.9" height="2" fill="#e98a50"/><rect x="41" y="29.5" width="1.9" height="2" fill="#e98a50"/><rect x="23" y="33.5" width="1.9" height="2" fill="#e98a50"/><rect x="41" y="33.5" width="1.9" height="2" fill="#e98a50"/><rect x="23" y="37.5" width="1.9" height="2" fill="#e98a50"/><rect x="41" y="37.5" width="1.9" height="2" fill="#e98a50"/><rect x="23" y="41.5" width="1.9" height="2" fill="#e98a50"/><rect x="41" y="41.5" width="1.9" height="2" fill="#e98a50"/></svg>
<div class="lbl" style="left:823.8px;top:303.9px">Videos</div>
<svg class="fi" style="left:259px;top:331px" width="48" height="48" viewBox="0 0 48 48"><path d="M2 44.2H46V46.3H2Z" fill="#000" fill-opacity="0.07"/><path d="M2.3 21V9.6Q2.3 8.1 3.8 8.1H20.3L23.3 11.2H44.5Q45.8 11.2 45.8 12.6V21Z" fill="url(#gTab)" stroke="#b4b4b4" stroke-width="0.9"/><rect x="5.1" y="10" width="12.8" height="1.9" fill="#ee8a55"/><path d="M1 16.7Q1 15.9 1.9 15.9H46.1Q47 15.9 47 16.7L45.9 43.6Q45.8 45 44.4 45H3.6Q2.2 45 2.1 43.6Z" fill="url(#gOrange)"/><path d="M1 16.7Q1 15.9 1.9 15.9H46.1Q47 15.9 47 16.7L45.9 43.6Q45.8 45 44.4 45H3.6Q2.2 45 2.1 43.6Z" fill="url(#gHi)"/><path d="M1.1 16H46.9L46.6 24.3Q24 26.5 1.5 32.5Z" fill="#fff" fill-opacity="0.12"/><path d="M2.2 44.3H45.8" stroke="#000" stroke-opacity="0.12" stroke-width="1.2"/><path d="M1.6 16.7H46.4" stroke="#fff" stroke-opacity="0.35" stroke-width="0.8"/></svg>
<div class="lbl" style="left:203.8px;top:380.9px">VirtualBox VMs</div>
<svg class="fi" style="left:414px;top:331px" width="48" height="48" viewBox="0 0 48 48"><path d="M2 44.2H46V46.3H2Z" fill="#000" fill-opacity="0.07"/><path d="M2.3 21V9.6Q2.3 8.1 3.8 8.1H20.3L23.3 11.2H44.5Q45.8 11.2 45.8 12.6V21Z" fill="url(#gTab)" stroke="#b4b4b4" stroke-width="0.9"/><rect x="5.1" y="10" width="12.8" height="1.9" fill="#ee8a55"/><path d="M1 16.7Q1 15.9 1.9 15.9H46.1Q47 15.9 47 16.7L45.9 43.6Q45.8 45 44.4 45H3.6Q2.2 45 2.1 43.6Z" fill="url(#gOrange)"/><path d="M1 16.7Q1 15.9 1.9 15.9H46.1Q47 15.9 47 16.7L45.9 43.6Q45.8 45 44.4 45H3.6Q2.2 45 2.1 43.6Z" fill="url(#gHi)"/><path d="M1.1 16H46.9L46.6 24.3Q24 26.5 1.5 32.5Z" fill="#fff" fill-opacity="0.12"/><path d="M2.2 44.3H45.8" stroke="#000" stroke-opacity="0.12" stroke-width="1.2"/><path d="M1.6 16.7H46.4" stroke="#fff" stroke-opacity="0.35" stroke-width="0.8"/></svg>
<div class="lbl" style="left:358.8px;top:380.9px">vmware</div>
<svg class="fi" style="left:569px;top:331px" width="48" height="48" viewBox="0 0 48 48"><path d="M2 44.2H46V46.3H2Z" fill="#000" fill-opacity="0.07"/><path d="M2.3 21V9.6Q2.3 8.1 3.8 8.1H20.3L23.3 11.2H44.5Q45.8 11.2 45.8 12.6V21Z" fill="url(#gTab)" stroke="#b4b4b4" stroke-width="0.9"/><rect x="5.1" y="10" width="12.8" height="1.9" fill="#222"/><path d="M1 16.7Q1 15.9 1.9 15.9H46.1Q47 15.9 47 16.7L45.9 43.6Q45.8 45 44.4 45H3.6Q2.2 45 2.1 43.6Z" fill="url(#gBlack)"/><path d="M1 16.7Q1 15.9 1.9 15.9H46.1Q47 15.9 47 16.7L45.9 43.6Q45.8 45 44.4 45H3.6Q2.2 45 2.1 43.6Z" fill="url(#gHiW)"/><path d="M1.1 16H46.9L46.6 24.3Q24 26.5 1.5 32.5Z" fill="#fff" fill-opacity="0.12"/><path d="M2.2 44.3H45.8" stroke="#000" stroke-opacity="0.12" stroke-width="1.2"/><path d="M1.6 16.7H46.4" stroke="#fff" stroke-opacity="0.35" stroke-width="0.8"/></svg>
<div class="lbl" style="left:513.8px;top:380.9px">work</div>
<div id="dlg"><div id="dtop">
<div class="a" style="left:8px;top:7px;width:15px;height:15px;border-radius:50%;background:linear-gradient(#f47a4e,#dc4c1c);box-shadow:0 0 0 1px rgba(50,30,20,0.55)"><svg width="15" height="15" style="position:absolute;left:0;top:0"><path d="M4.6 4.6L10.4 10.4M10.4 4.6L4.6 10.4" stroke="#3a2a22" stroke-width="1.2"/></svg></div>
<div class="a" style="left:27px;top:7px;width:15px;height:15px;border-radius:50%;background:linear-gradient(#75736d,#5f5d58);box-shadow:0 0 0 1px rgba(40,40,36,0.6)"><svg width="15" height="15" style="position:absolute;left:0;top:0"><path d="M4 7.5H11" stroke="#35342f" stroke-width="1.3"/></svg></div>
<div class="a" style="left:46px;top:7px;width:15px;height:15px;border-radius:50%;background:linear-gradient(#75736d,#5f5d58);box-shadow:0 0 0 1px rgba(40,40,36,0.6)"><svg width="15" height="15" style="position:absolute;left:0;top:0"><rect x="4.6" y="4.6" width="5.8" height="5.8" fill="none" stroke="#35342f" stroke-width="1.2"/></svg></div>
<div class="a" style="left:73px;top:7px;font-weight:bold;font-size:14.6px;line-height:16px;color:#dfdbd2;white-space:nowrap">Choose a Folder Color</div>
</div>
<svg class="a" style="left:0;top:0" width="200" height="230"><defs><linearGradient id="tgA" gradientUnits="userSpaceOnUse" x1="62.52" y1="66.28" x2="118.14" y2="158.86"><stop offset="0" stop-color="#00ff04"/><stop offset="1" stop-color="#000"/></linearGradient><linearGradient id="tgB" gradientUnits="userSpaceOnUse" x1="171.59" y1="126.74" x2="63.61" y2="128.63"><stop offset="0" stop-color="#fff"/><stop offset="1" stop-color="#000"/></linearGradient></defs><g style="isolation:isolate"><rect x="56" y="60" width="122" height="138" fill="#f2f1f0"/><polygon points="62.52,66.28 171.59,126.74 64.69,190.97" fill="#000"/><polygon points="62.52,66.28 171.59,126.74 64.69,190.97" fill="url(#tgA)" style="mix-blend-mode:plus-lighter"/><polygon points="62.52,66.28 171.59,126.74 64.69,190.97" fill="url(#tgB)" style="mix-blend-mode:plus-lighter"/></g></svg>
<div class="a" style="left:12.6px;top:41.0px;width:174.0px;height:174.0px;border-radius:50%;background:conic-gradient(from 0deg,#80ff00 0deg,#ffff00 30deg,#ff0000 90deg,#ff00ff 150deg,#0000ff 210deg,#00ffff 270deg,#00ff00 330deg,#80ff00 360deg);-webkit-mask:radial-gradient(circle,transparent 71.4px,#000 72.4px,#000 86.4px,transparent 87.2px);mask:radial-gradient(circle,transparent 71.4px,#000 72.4px,#000 86.4px,transparent 87.2px)"></div>
<svg class="a" style="left:0;top:0" width="200" height="230"><path d="M62.77 66.71L54.53 53.00" stroke="#000" stroke-width="2.2"/><circle cx="69.9" cy="155.1" r="3.9" fill="none" stroke="#fff" stroke-width="2"/></svg>
<div class="a" style="left:12px;top:222px;width:136px;height:32px;border:1px solid #c4c1bc;border-radius:2px;background:linear-gradient(90deg,#fff 50%,#0c500d 50%)"></div>
<div class="a" style="left:155px;top:223px;width:32px;height:30px;border:1px solid #b4b1ac;border-radius:4px;background:linear-gradient(#fcfcfb,#e9e8e6)"><svg width="30" height="29" style="position:absolute;left:0;top:0"><path d="M10.5 19.5L17 13" stroke="#6a86a8" stroke-width="2.6" stroke-linecap="round"/><path d="M16 11.5L18.5 9Q20 7.5 21.5 9Q23 10.5 21.5 12L19 14.5Z" fill="#333"/><path d="M15 10.5L20 15.5" stroke="#333" stroke-width="1.5"/><path d="M9.5 20.5L8.5 21.5" stroke="#444" stroke-width="1.2"/></svg></div>
<div class="dl" style="left:200.5px;top:47.2px">Hue:</div>
<div class="dl" style="left:200.5px;top:81.9px">Saturation:</div>
<div class="dl" style="left:200.5px;top:116.8px">Value:</div>
<div class="dl" style="left:200.5px;top:159.4px">Color name:</div>
<div class="dl" style="left:457px;top:47.2px">Red:</div>
<div class="dl" style="left:457px;top:81.9px">Green:</div>
<div class="dl" style="left:457px;top:116.8px">Blue:</div>
<div class="spin" style="left:294.2px;top:40.9px;width:102px;height:27.3px"><div class="v" style="width:44.2px;height:25.3px;line-height:26.5px">121</div><div class="a" style="left:72.4px;top:0;width:1px;height:25.3px;background:#dcd9d4"></div><svg width="12" height="12" style="position:absolute;left:51.5px;top:6.5px"><path d="M1 6H11" stroke="#383838" stroke-width="1.7"/></svg><svg width="12" height="12" style="position:absolute;left:80.4px;top:6.5px"><path d="M1 6H11M6 1V11" stroke="#383838" stroke-width="1.7"/></svg></div>
<div class="spin" style="left:514.2px;top:40.9px;width:102px;height:27.3px"><div class="v" style="width:44.2px;height:25.3px;line-height:26.5px">12</div><div class="a" style="left:72.4px;top:0;width:1px;height:25.3px;background:#dcd9d4"></div><svg width="12" height="12" style="position:absolute;left:51.5px;top:6.5px"><path d="M1 6H11" stroke="#383838" stroke-width="1.7"/></svg><svg width="12" height="12" style="position:absolute;left:80.4px;top:6.5px"><path d="M1 6H11M6 1V11" stroke="#383838" stroke-width="1.7"/></svg></div>
<div class="spin" style="left:294.2px;top:75.9px;width:102px;height:27.3px"><div class="v" style="width:44.2px;height:25.3px;line-height:26.5px">85</div><div class="a" style="left:72.4px;top:0;width:1px;height:25.3px;background:#dcd9d4"></div><svg width="12" height="12" style="position:absolute;left:51.5px;top:6.5px"><path d="M1 6H11" stroke="#383838" stroke-width="1.7"/></svg><svg width="12" height="12" style="position:absolute;left:80.4px;top:6.5px"><path d="M1 6H11M6 1V11" stroke="#383838" stroke-width="1.7"/></svg></div>
<div class="spin" style="left:514.2px;top:75.9px;width:102px;height:27.3px"><div class="v" style="width:44.2px;height:25.3px;line-height:26.5px">80</div><div class="a" style="left:72.4px;top:0;width:1px;height:25.3px;background:#dcd9d4"></div><svg width="12" height="12" style="position:absolute;left:51.5px;top:6.5px"><path d="M1 6H11" stroke="#383838" stroke-width="1.7"/></svg><svg width="12" height="12" style="position:absolute;left:80.4px;top:6.5px"><path d="M1 6H11M6 1V11" stroke="#383838" stroke-width="1.7"/></svg></div>
<div class="spin" style="left:294.2px;top:110.9px;width:102px;height:27.3px"><div class="v" style="width:44.2px;height:25.3px;line-height:26.5px">31</div><div class="a" style="left:72.4px;top:0;width:1px;height:25.3px;background:#dcd9d4"></div><svg width="12" height="12" style="position:absolute;left:51.5px;top:6.5px"><path d="M1 6H11" stroke="#383838" stroke-width="1.7"/></svg><svg width="12" height="12" style="position:absolute;left:80.4px;top:6.5px"><path d="M1 6H11M6 1V11" stroke="#383838" stroke-width="1.7"/></svg></div>
<div class="spin" style="left:514.2px;top:110.9px;width:102px;height:27.3px"><div class="v" style="width:44.2px;height:25.3px;line-height:26.5px">13</div><div class="a" style="left:72.4px;top:0;width:1px;height:25.3px;background:#dcd9d4"></div><svg width="12" height="12" style="position:absolute;left:51.5px;top:6.5px"><path d="M1 6H11" stroke="#383838" stroke-width="1.7"/></svg><svg width="12" height="12" style="position:absolute;left:80.4px;top:6.5px"><path d="M1 6H11M6 1V11" stroke="#383838" stroke-width="1.7"/></svg></div>
<div class="a" style="left:200px;top:145px;width:417px;height:1px;background:#dad7d2"></div>
<div class="a" style="left:294.4px;top:154.4px;width:137px;height:26px;border:1px solid #b8b5b0;border-radius:4px;background:linear-gradient(#f6f6f6,#fff 40%);font-size:14.6px;line-height:24px;padding-left:7px;color:#3c3c3c">#0C500D</div>
<div class="btn" style="left:442px;top:267px;width:82.5px;height:26.5px;line-height:25px">Cancel</div>
<div class="btn" style="left:533px;top:267px;width:82.5px;height:26.5px;line-height:25px;border-color:#8e8b86;box-shadow:inset 0 0 0 1px #cfccc7">Select</div>
</div>
</body></html>
